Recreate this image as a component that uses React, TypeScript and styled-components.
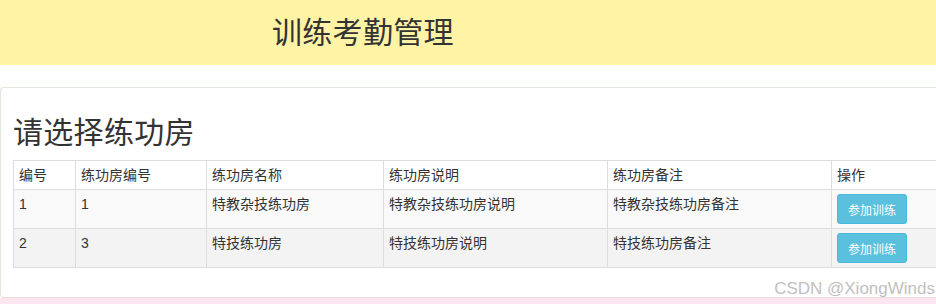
import styled, { createGlobalStyle } from 'styled-components';

const GlobalStyle = createGlobalStyle`
    html, body {
        margin: 0;
        padding: 0;
        background: #fff;
        overflow: hidden;
    }
    body {
        font-family: "Liberation Sans", "Noto Sans CJK SC", sans-serif;
        font-size: 14px;
        color: #333;
    }
`;

const rooms = [
    { id: 1, no: '1', name: '特教杂技练功房', desc: '特教杂技练功房说明', note: '特教杂技练功房备注' },
    { id: 2, no: '3', name: '特技练功房', desc: '特技练功房说明', note: '特技练功房备注' },
];

const columns = [
    { label: '编号', width: 62 },
    { label: '练功房编号', width: 131 },
    { label: '练功房名称', width: 177 },
    { label: '练功房说明', width: 224 },
    { label: '练功房备注', width: 224 },
    { label: '操作', width: 150 },
];

// #region Styles

const Page = styled.div`
    position: relative;
    width: 936px;
    height: 304px;
    overflow: hidden;
`;

const Header = styled.header`
    height: 65px;
    background-color: #fff3a6;
    padding-left: 272px;
    box-sizing: border-box;
    h1 {
        margin: 0;
        padding-top: 13px;
        font-size: 30px;
        font-weight: 400;
        line-height: 40px;
        color: #333;
        letter-spacing: 0.3px;
    }
`;

const Panel = styled.section`
    margin-top: 22px;
    width: 1000px;
    height: 211px;
    box-sizing: border-box;
    border: 1px solid #e0e8da;
    border-bottom-color: #e4e0dc;
    border-radius: 4px;
    padding: 28px 0 0 12px;
    h2 {
        margin: 0 0 11px 0;
        font-size: 30px;
        font-weight: 400;
        line-height: 33px;
        color: #333;
        letter-spacing: 0.3px;
    }
`;

const Pink = styled.div`
    height: 8px;
    background-color: #fde6ef;
`;

const Table = styled.table`
    border-collapse: collapse;
    table-layout: fixed;
    font-size: 14px;
    th, td {
        border: 1px solid #ddd;
        padding: 4px 5px 4px 5px;
        text-align: left;
        vertical-align: top;
        line-height: 20px;
        font-weight: 400;
    }
    thead tr {
        background-color: #fff;
    }
    tbody tr:nth-child(odd) {
        background-color: #f9f9f9;
    }
    tbody tr:nth-child(even) {
        background-color: #f3f3f3;
    }
`;

const InfoButton = styled.button`
    display: block;
    width: 70px;
    height: 30px;
    padding: 0;
    font-family: "Liberation Sans", "Noto Sans CJK SC", sans-serif;
    font-size: 12px;
    color: #fff;
    background-color: #5bc0de;
    border: 1px solid #46b8da;
    border-radius: 3px;
    cursor: pointer;
`;

const Watermark = styled.div`
    position: absolute;
    right: 1px;
    bottom: 5px;
    font-family: "Liberation Sans", sans-serif;
    font-size: 17px;
    line-height: 20px;
    color: #bfbfbf;
    text-shadow: 0 0 1px #fff;
`;

// #endregion

export default function App() {
    return (
        <Page>
            <GlobalStyle />
            <Header>
                <h1>训练考勤管理</h1>
            </Header>
            <Panel>
                <h2>请选择练功房</h2>
                <Table>
                    <colgroup>
                        {columns.map((col) => (
                            <col key={col.label} style={{ width: col.width }} />
                        ))}
                    </colgroup>
                    <thead>
                        <tr>
                            {columns.map((col) => (
                                <th key={col.label}>{col.label}</th>
                            ))}
                        </tr>
                    </thead>
                    <tbody>
                        {rooms.map((room) => (
                            <tr key={room.id}>
                                <td>{room.id}</td>
                                <td>{room.no}</td>
                                <td>{room.name}</td>
                                <td>{room.desc}</td>
                                <td>{room.note}</td>
                                <td>
                                    <InfoButton>参加训练</InfoButton>
                                </td>
                            </tr>
                        ))}
                    </tbody>
                </Table>
            </Panel>
            <Pink />
            <Watermark>CSDN @XiongWinds</Watermark>
        </Page>
    );
}
